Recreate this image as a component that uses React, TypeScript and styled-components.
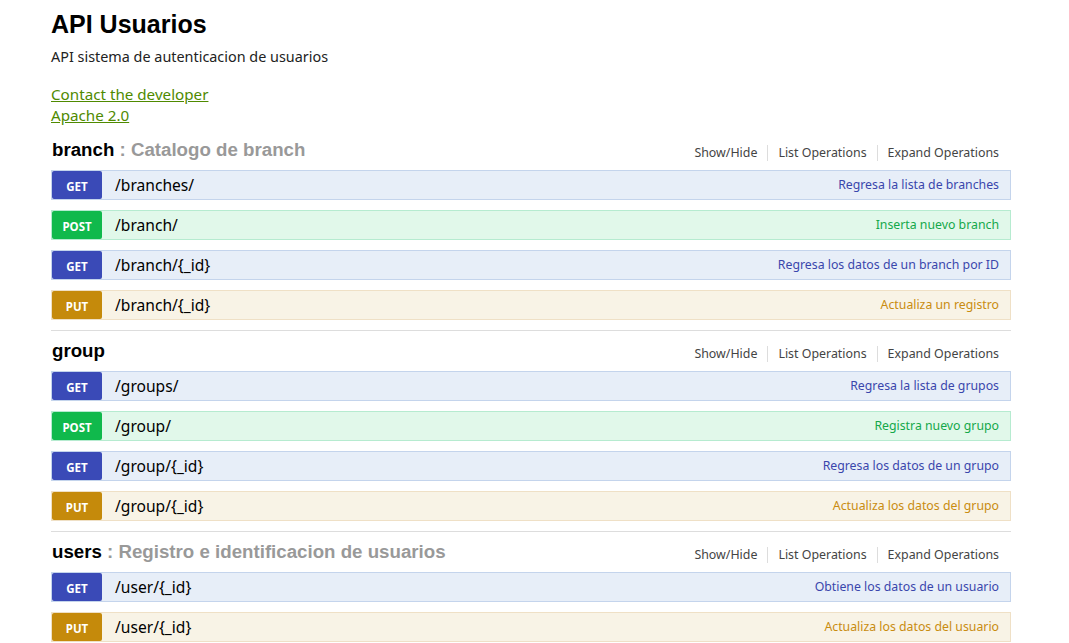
import React from "react";
import styled, { createGlobalStyle } from "styled-components";

const Global = createGlobalStyle`
  html, body { margin: 0; padding: 0; background: #fff; }
  body { font-family: "Noto Sans", "Open Sans", sans-serif; color: #333; }
`;

type Method = "GET" | "POST" | "PUT";

const palette: Record<Method, { badge: string; bg: string; border: string; text: string }> = {
  GET: { badge: "#3a4ab7", bg: "#e7eef8", border: "#c4d4ec", text: "#3a46ac" },
  POST: { badge: "#10b94c", bg: "#e1f8ea", border: "#b6ebd0", text: "#14a84a" },
  PUT: { badge: "#c58a0b", bg: "#f8f3e6", border: "#efe0c6", text: "#c98c10" },
};

const Wrap = styled.div`
  width: 960px;
  padding: 0 0 0 51px;
`;

const Title = styled.h1`
  margin: 9px 0 0;
  font-family: "Liberation Sans", Arial, sans-serif;
  font-weight: bold;
  font-size: 25px;
  line-height: 30px;
  color: #000;
`;

const Desc = styled.p`
  margin: 8px 0 0;
  font-size: 14.4px;
  line-height: 20px;
  color: #222;
`;

const Links = styled.div`
  margin-top: 17px;
  display: flex;
  flex-direction: column;
`;

const Link = styled.a`
  font-size: 15.2px;
  line-height: 21px;
  color: #4f8a00;
  text-decoration: underline;
  align-self: flex-start;
`;

const Resources = styled.div`
  margin-top: 4px;
`;

const Section = styled.section`
  border-bottom: 1px solid #ddd;
`;

const Heading = styled.div`
  height: 40px;
  display: flex;
  align-items: center;
  justify-content: space-between;
`;

const Name = styled.h2`
  margin: 0;
  padding-left: 1px;
  font-family: "Liberation Sans", Arial, sans-serif;
  font-weight: bold;
  font-size: 18.7px;
  color: #999;
  span { color: #000; }
`;

const Options = styled.ul`
  list-style: none;
  margin: 5px 12px 0 0;
  padding: 0;
  display: flex;
  align-items: center;
`;

const Option = styled.li`
  font-size: 12.4px;
  line-height: 16px;
  color: #444;
  padding: 0 10px;
  border-left: 1px solid #ddd;
  &:first-child { border-left: none; padding-left: 0; }
  &:last-child { padding-right: 0; }
`;

const Ops = styled.div`
  display: flex;
  flex-direction: column;
  gap: 10px;
  padding-bottom: 10px;
`;

const Row = styled.div<{ $m: Method }>`
  height: 28px;
  display: flex;
  align-items: center;
  background: ${(p) => palette[p.$m].bg};
  border: 1px solid ${(p) => palette[p.$m].border};
  padding-right: 11px;
`;

const Badge = styled.span<{ $m: Method }>`
  width: 50px;
  height: 28px;
  display: flex;
  align-items: center;
  justify-content: center;
  background: ${(p) => palette[p.$m].badge};
  color: #fff;
  font-weight: bold;
  font-size: 11.5px;
  border-radius: 2px;
  padding-top: 2px;
  box-sizing: border-box;
`;

const Path = styled.span`
  flex: 1;
  padding-left: 13px;
  padding-bottom: 1px;
  font-size: 15.6px;
  color: #000;
`;

const Summary = styled.span<{ $m: Method }>`
  font-size: 12.3px;
  padding-bottom: 1px;
  color: ${(p) => palette[p.$m].text};
`;

type Op = { m: Method; path: string; summary: string };
type Res = { name: string; desc?: string; ops: Op[] };

const resources: Res[] = [
  {
    name: "branch",
    desc: "Catalogo de branch",
    ops: [
      { m: "GET", path: "/branches/", summary: "Regresa la lista de branches" },
      { m: "POST", path: "/branch/", summary: "Inserta nuevo branch" },
      { m: "GET", path: "/branch/{_id}", summary: "Regresa los datos de un branch por ID" },
      { m: "PUT", path: "/branch/{_id}", summary: "Actualiza un registro" },
    ],
  },
  {
    name: "group",
    ops: [
      { m: "GET", path: "/groups/", summary: "Regresa la lista de grupos" },
      { m: "POST", path: "/group/", summary: "Registra nuevo grupo" },
      { m: "GET", path: "/group/{_id}", summary: "Regresa los datos de un grupo" },
      { m: "PUT", path: "/group/{_id}", summary: "Actualiza los datos del grupo" },
    ],
  },
  {
    name: "users",
    desc: "Registro e identificacion de usuarios",
    ops: [
      { m: "GET", path: "/user/{_id}", summary: "Obtiene los datos de un usuario" },
      { m: "PUT", path: "/user/{_id}", summary: "Actualiza los datos del usuario" },
    ],
  },
];

export default function App() {
  return (
    <Wrap>
      <Global />
      <Title>API Usuarios</Title>
      <Desc>API sistema de autenticacion de usuarios</Desc>
      <Links>
        <Link href="#">Contact the developer</Link>
        <Link href="#">Apache 2.0</Link>
      </Links>
      <Resources>
        {resources.map((r) => (
          <Section key={r.name}>
            <Heading>
              <Name>
                <span>{r.name}</span>
                {r.desc ? ` : ${r.desc}` : ""}
              </Name>
              <Options>
                <Option>Show/Hide</Option>
                <Option>List Operations</Option>
                <Option>Expand Operations</Option>
              </Options>
            </Heading>
            <Ops>
              {r.ops.map((o, i) => (
                <Row key={i} $m={o.m}>
                  <Badge $m={o.m}>{o.m}</Badge>
                  <Path>{o.path}</Path>
                  <Summary $m={o.m}>{o.summary}</Summary>
                </Row>
              ))}
            </Ops>
          </Section>
        ))}
      </Resources>
    </Wrap>
  );
}
